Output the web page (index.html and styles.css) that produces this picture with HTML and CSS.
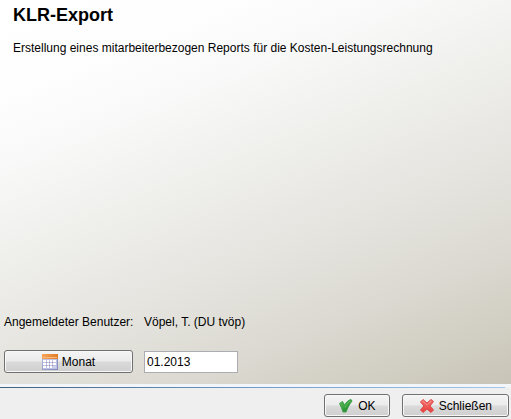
FILE: index.html
```html
<!DOCTYPE html>
<html lang="de">

<head>
    <meta charset="UTF-8">
    <meta name="viewport" content="width=device-width, initial-scale=1.0">
    <title>KLR-Export</title>
    <link rel="stylesheet" href="styles.css">
</head>

<body>

    <form class="dialog">
        <main class="panel">
            <header class="intro">
                <h1>KLR-Export</h1>
                <p>Erstellung eines mitarbeiterbezogen Reports für die Kosten-Leistungsrechnung</p>
            </header>

            <div class="fields">
                <span>Angemeldeter Benutzer:</span>
                <span>Vöpel, T. (DU tvöp)</span>
                <button type="button" class="button" id="month-button">
                    <svg width="16" height="16" viewBox="0 0 16 16" aria-hidden="true">
                        <defs>
                            <linearGradient id="cal-body" x1="0" y1="0" x2="1" y2="1">
                                <stop offset="0" stop-color="#b5bce0"/>
                                <stop offset="1" stop-color="#8285b8"/>
                            </linearGradient>
                            <linearGradient id="cal-top" x1="0" y1="0" x2="1" y2="0">
                                <stop offset="0" stop-color="#f6a55c"/>
                                <stop offset="1" stop-color="#e07b28"/>
                            </linearGradient>
                        </defs>
                        <rect width="16" height="16" fill="url(#cal-body)"/>
                        <rect width="16" height="5" fill="url(#cal-top)"/>
                        <path d="M1 3.500h14" stroke="#fbb878"/>
                        <path d="M1 5h14v10H1z" fill="#bcc3e6"/>
                        <path d="M1 6h3v2H1zM5 6h2v2H5zM8 6h2v2H8zM11 6h3v2h-3zM1 9h3v2H1zM5 9h2v2H5zM8 9h2v2H8zM11 9h3v2h-3zM1 12h3v2H1zM5 12h2v2H5zM8 12h2v2H8z" fill="#fff"/>
                        <path d="M11 12h3v2h-3z" fill="#cfd0ea"/>
                        <path d="M4 8h1v1H4zM7 8h1v1H7zM10 8h1v1h-1zM4 11h1v1H4zM7 11h1v1H7zM10 11h1v1h-1z" fill="#c98c9c"/>
                    </svg>
                    Monat
                </button>
                <input type="text" class="month" name="month" value="01.2013" aria-labelledby="month-button">
            </div>
        </main>

        <footer class="actions">
            <button type="submit" class="button">
                <svg width="16" height="16" viewBox="0 0 16 16" aria-hidden="true">
                    <defs>
                        <linearGradient id="check" x1="0" y1="0" x2="1" y2="1">
                            <stop offset="0" stop-color="#6cc46a"/>
                            <stop offset="0.500" stop-color="#35a03c"/>
                            <stop offset="1" stop-color="#1c7a28"/>
                        </linearGradient>
                    </defs>
                    <path d="M1.500 5.500L4.500 3.500L6.500 7C8 4.500 10.500 2 13 1.500L14 3C11.500 6 9.500 10 8 14L5 14C4 11 3 8 1.500 5.500z" fill="url(#check)" stroke="#3f9d47" stroke-linejoin="round"/>
                    <path d="M7 9.500C8.500 6.500 10.500 4 12.500 3" fill="none" stroke="#8fdc8a" stroke-opacity=".6"/>
                </svg>
                OK
            </button>
            <button type="button" class="button close">
                <svg width="16" height="16" viewBox="0 0 16 16" aria-hidden="true">
                    <defs>
                        <linearGradient id="cross" x1="0" y1="0" x2="0" y2="1">
                            <stop offset="0" stop-color="#f47a74"/>
                            <stop offset="1" stop-color="#e83c3c"/>
                        </linearGradient>
                    </defs>
                    <path d="M4 1.500L8 5L12 1.500L14.500 3.500L11 8L14.500 12L12 14.500L8 11L4 14.500L1.500 12L5 8L1.500 4z" fill="url(#cross)" stroke="#dc4545" stroke-linejoin="round"/>
                    <path d="M4 3L8 7L12 3" fill="none" stroke="#fbb0aa" stroke-opacity=".5"/>
                </svg>
                Schließen
            </button>
        </footer>
    </form>

</body>

</html>
```

FILE: styles.css
```css
body {
    font-family: "Liberation Sans", Arial, sans-serif;
    font-size: 12px;
    line-height: 16px;
    color: #000;
    background-color: #efefef;
    margin: 0;
}

.dialog {
    display: flex;
    flex-direction: column;
    min-height: 100vh;
}

.panel {
    flex: 1;
    display: flex;
    flex-direction: column;
    justify-content: space-between;
    background: linear-gradient(158deg, #ffffff 0%, #fefefe 16%, #f9f9f9 28%, #efefec 44%, #e6e5e0 60%, #dbd9d1 77%, #cfccc0 92%, #c8c4b6 100%);
}

.intro {
    padding: 4px 13px;
}

.intro h1 {
    font-size: 18px;
    line-height: 22px;
    margin: 0 0 14px;
}

.intro p {
    margin: 0;
}

.fields {
    display: grid;
    grid-template-columns: 129px 94px;
    column-gap: 11px;
    row-gap: 20px;
    align-items: center;
    padding: 0 4px 11px;
}

.fields span {
    white-space: nowrap;
}

.button {
    display: flex;
    align-items: center;
    justify-content: center;
    gap: 4px;
    height: 23px;
    padding: 0 13px;
    font: inherit;
    color: #000;
    background: linear-gradient(#f4f4f4 0%, #ebebeb 48%, #dadada 52%, #cfcfcf 100%);
    border: 1px solid #707070;
    border-radius: 3px;
    box-shadow: inset 0 0 0 1px #f8f8f8;
}

.button.close {
    padding: 0 16px;
}

.month {
    box-sizing: border-box;
    width: 100%;
    height: 22px;
    padding: 0 2px;
    font: inherit;
    color: #000;
    background-color: #fff;
    border: 1px solid #abadb3;
}

.actions {
    display: flex;
    justify-content: flex-end;
    gap: 12px;
    padding: 7px 2px 2px;
    border-top: 3px solid #f2f5f9;
    background: linear-gradient(to right, #44607f, #6f9cc8 50%, #a5c8ea) no-repeat left top / calc(100% - 6px) 1px;
}
```
